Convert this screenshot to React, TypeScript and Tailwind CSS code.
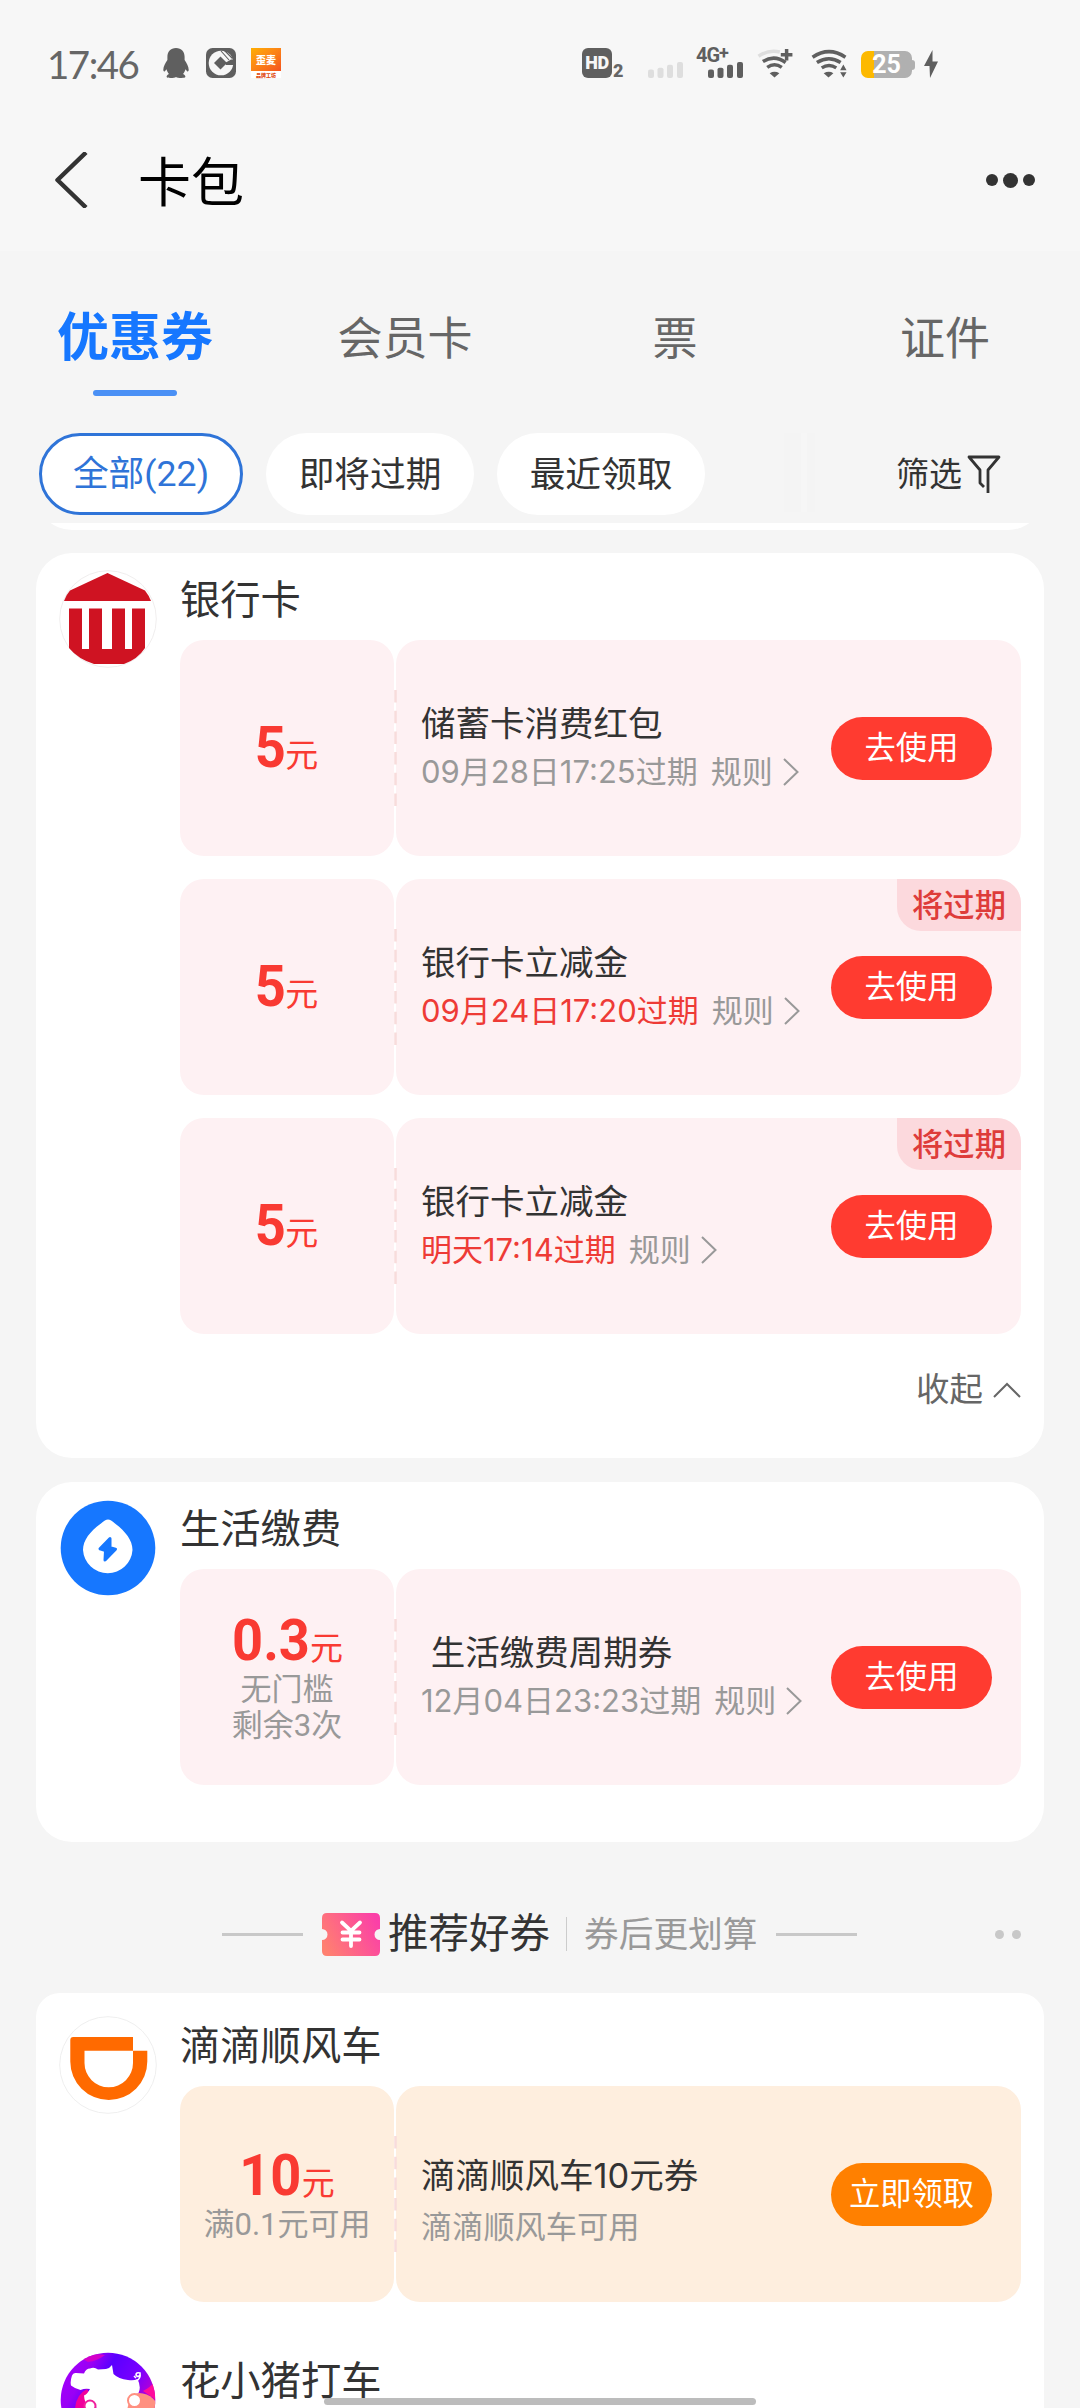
import type { ReactNode } from "react";

const DARK = "#5f5f5f";

function StatusBar() {
  return (
    <div className="flex h-[124px] items-start pl-[47px] pt-[48px] text-[#666]">
      <div className="w-[96px] font-['Lato'] text-[38.5px] leading-[33px] tracking-[-1.5px]">17:46</div>
      <svg className="ml-[20px] h-[30px] w-[26px]" viewBox="0 0 26 31" preserveAspectRatio="none" fill={DARK}>
        <path d="M13 0C7.500 0 4.400 4 4.400 9v3.500C2.500 15.500.3 19 .3 22.500c0 1.500.8 2 1.600 1.500l1.600-2c.5 2 1.300 3.500 2.500 4.800-1.500.8-2.400 1.800-2.400 3 0 1 1.500 1.200 4 1.200 2.600 0 4.500-.4 5.400-1 .9.600 2.800 1 5.400 1 2.500 0 4-.2 4-1.200 0-1.200-.9-2.200-2.400-3 1.200-1.300 2-2.800 2.500-4.800l1.600 2c.8.5 1.600 0 1.600-1.500 0-3.500-2.200-7-4.100-10V9c0-5-3.100-9-8.600-9z" />
      </svg>
      <svg className="ml-[17px] h-[30px] w-[30px]" viewBox="0 0 30 30">
        <rect width="30" height="30" rx="6.500" fill={DARK} />
        <circle cx="15" cy="15" r="12.300" fill="#f7f7f7" />
        <path d="M14.500 8.500l6.500 6.500-6.500 6.500L8 15z" fill={DARK} />
        <path d="M19 15L25 11.500h5V17h-10z" fill={DARK} />
        <path d="M15 3l8 9M18.500 2.500l8 8" stroke={DARK} strokeWidth="1.100" />
      </svg>
      <div className="ml-[15px] flex h-[30px] w-[30px] flex-col bg-white font-['Noto_Sans_CJK_SC']">
        <div className="flex h-[23px] items-center justify-center bg-linear-to-br from-[#ffae00] to-[#f4511e] text-[10px] font-black leading-none text-white">歪麦</div>
        <div className="flex h-[7px] items-center justify-center whitespace-nowrap text-[5px] font-black leading-none text-[#e04a10]">品牌工坊</div>
      </div>

      <div className="ml-[301px] flex h-[30px] w-[30px] items-center justify-center rounded-[6px] bg-[#5f5f5f] font-['Roboto'] text-[18px] font-black leading-none tracking-[-0.5px] text-[#f7f7f7]">HD</div>
      <div className="ml-[1px] mt-[14px] w-[12px] font-['Roboto'] text-[18px] font-black leading-[18px]">2</div>
      <Bars className="ml-[23px] mt-[14px]" color="#dedede" />
      <div className="ml-[13px] h-[30px] w-[48px]">
        <div className="flex h-[14px] font-['Roboto'] text-[20px] font-bold leading-[15px] tracking-[-1px] text-[#5f5f5f]">
          4G<span className="text-[18px] leading-[9px]">+</span>
        </div>
        <Bars className="ml-[12px]" color={DARK} />
      </div>
      <svg className="ml-[13px] h-[30px] w-[36px]" viewBox="0 0 36 31" fill="none" strokeWidth="3.600">
        <path d="M1 8.500Q11 1.500 23 4.200" stroke="#dedede" />
        <path d="M5.500 14Q17.500 6.500 29 15" stroke={DARK} />
        <path d="M10 20Q17.500 14.500 25 20" stroke={DARK} />
        <path d="M12.500 26Q17.500 23 22.500 26L17.500 30.500z" fill={DARK} />
        <path d="M30 1v12M24 7h12" stroke={DARK} />
      </svg>
      <svg className="ml-[18px] h-[30px] w-[37px]" viewBox="0 0 37 31" fill="none" strokeWidth="3.600">
        <path d="M1 9.500Q18 -2 35 9.500M5.500 15Q18 7 30 15M10.500 20.500Q18 15.500 25.500 20.500" stroke={DARK} />
        <path d="M12.500 26Q18 23 22.500 26L17.500 30.500z" fill={DARK} />
        <path d="M29.500 23l3.300-6 3.300 6zM29.500 25l3.300 5.500 3.300-5.500z" fill={DARK} />
      </svg>
      <div className="ml-[13px] mt-[3px] flex items-center">
        <div className="flex h-[27px] w-[51px] items-center justify-center rounded-[7px] bg-linear-to-r from-[#fdb900] from-25% to-[#b0b0b0] to-25% font-['Roboto'] text-[25px] font-bold leading-none text-white">25</div>
        <div className="h-[10px] w-[3px] rounded-r-[3px] bg-[#b0b0b0]" />
      </div>
      <svg className="ml-[9px] mt-[2px] h-[28px] w-[14px]" viewBox="0 0 14 28" fill={DARK}>
        <path d="M8.500 0L0 16h5.500L6 28l8-16.500H8.500z" />
      </svg>
    </div>
  );
}

function Bars({ className, color }: { className: string; color: string }) {
  return (
    <svg className={`h-[16px] w-[35px] ${className}`} viewBox="0 0 35 17" preserveAspectRatio="none" fill={color}>
      <rect x="0" y="8" width="6" height="9" rx="2" />
      <rect x="9.500" y="6" width="6" height="11" rx="2" />
      <rect x="19" y="3" width="6" height="14" rx="2" />
      <rect x="29" y="0" width="6" height="17" rx="2" />
    </svg>
  );
}

function NavBar() {
  return (
    <div className="flex h-[127px] items-start pl-[54px] pr-[45px]">
      <svg className="mt-[28px] h-[56px] w-[34px]" viewBox="0 0 34 56" fill="none" stroke="#333" strokeWidth="4.500">
        <path d="M32 0.500L3.500 28 32 55.500" strokeLinejoin="round" />
      </svg>
      <h1 className="ml-[50px] mt-[26px] text-[53px] leading-[66px] text-black">卡包</h1>
      <div className="ml-auto mt-[48px] flex h-[16px] items-center gap-[5px]">
        <i className="size-[12px] rounded-full bg-[#333]" />
        <i className="size-[15px] rounded-full bg-[#333]" />
        <i className="size-[12px] rounded-full bg-[#333]" />
      </div>
    </div>
  );
}

function Tabs() {
  return (
    <nav className="grid h-[182px] shrink-0 grid-cols-4 pt-[54px] text-center text-[45px] leading-[68px] text-[#666]">
      <div className="flex flex-col items-center">
        <span className="text-[52px] font-bold leading-[66px] text-[#1677ff]">优惠券</span>
        <i className="mt-[19px] h-[6px] w-[84px] rounded-full bg-[#4a90f5]" />
      </div>
      <span>会员卡</span>
      <span>票</span>
      <span>证件</span>
    </nav>
  );
}

function Filters() {
  return (
    <div className="flex h-[90px] shrink-0 items-start pl-[39px] text-[35.7px] leading-none text-[#333]">
      <div className="flex h-[82px] w-[204px] items-center justify-center rounded-full border-[3px] border-[#2f74d8] bg-white pt-[2px] font-['Roboto','Noto_Sans_CJK_SC'] text-[#2f74d8]">全部(22)</div>
      <div className="ml-[23px] flex h-[82px] w-[208px] items-center justify-center rounded-full bg-white pt-[1px]">即将过期</div>
      <div className="ml-[23px] flex h-[82px] w-[208px] items-center justify-center rounded-full bg-white pt-[1px]">最近领取</div>
      <div className="ml-[79px] flex h-[79px] w-[31px] justify-end bg-[#f4f4f4]">
        <i className="mr-[8px] w-[6px] bg-[#f6f6f6]" />
      </div>
      <div className="ml-[81px] flex h-[82px] items-center text-[33px]">
        筛选
        <svg className="ml-[5px] h-[38px] w-[34px]" viewBox="0 0 34 38" fill="none" stroke="#333" strokeWidth="2.800">
          <path d="M21 38V15L32 2H2l11 13v13l4 4" strokeLinejoin="round" />
        </svg>
      </div>
    </div>
  );
}

function Chevron() {
  return (
    <svg className="ml-[10px] h-[28px] w-[16px]" viewBox="0 0 16 28" fill="none" stroke="#999" strokeWidth="2">
      <path d="M1 1l13.500 13L1 27" />
    </svg>
  );
}

type CouponProps = {
  amount: string;
  notes?: string[];
  title: string;
  date?: string;
  urgent?: boolean;
  badge?: boolean;
  sub?: string;
};

function Coupon({ amount, notes = [], title, date, urgent, badge, sub }: CouponProps) {
  const tone = sub ? "bg-[#feeede]" : "bg-[#fef1f3]";
  return (
    <div className="relative flex h-[216px] gap-[2px]">
      <div className={`flex w-[214px] flex-col items-center justify-center rounded-[24px] ${tone}`}>
        <div className="flex h-[60px] items-baseline pr-[3px] text-[#f93a32]">
          <span className="origin-right scale-x-95 font-['Roboto'] text-[57px] font-bold leading-[60px]">{amount}</span>
          <span className="text-[33px] leading-none">元</span>
        </div>
        {notes.map((n) => (
          <div key={n} className="h-[36px] font-['Roboto','Noto_Sans_CJK_SC'] text-[31px] leading-[37px] text-[#999]">{n}</div>
        ))}
      </div>
      <svg className="absolute left-[214px] top-[50px] h-[117px] w-[3px]" viewBox="0 0 3 117">
        <path d="M1.500 0V117" stroke="#f8dcdb" strokeWidth="2.500" strokeDasharray="12.500 8.200" />
      </svg>
      <div className={`flex flex-1 items-center rounded-[24px] pl-[25px] pr-[29px] ${tone}`}>
        <div className={`leading-[48px] ${sub ? "pt-[11px]" : ""}`}>
          <div className="h-[48px] whitespace-pre text-[34.5px] text-[#333]">{title}</div>
          {date && (
            <div className="flex h-[48px] items-center text-[31px] text-[#999]">
              <span className={urgent ? "text-[#ee3b36]" : ""}>{date}</span>
              <span className="ml-[13px]">规则</span>
              <Chevron />
            </div>
          )}
          {sub && <div className="h-[48px] pt-[3px] text-[31.2px] text-[#999]">{sub}</div>}
        </div>
        <button
          className={`ml-auto flex h-[63px] w-[161px] items-center justify-center rounded-full pt-[2px] text-[31.3px] leading-none text-white ${sub ? "bg-[#ff8000]" : "bg-[#ff3b30]"}`}
        >
          {sub ? "立即领取" : "去使用"}
        </button>
      </div>
      {badge && (
        <div className="absolute right-0 top-0 flex h-[52px] w-[124px] items-center justify-center rounded-bl-[24px] rounded-tr-[24px] bg-[#fcd9dd] pt-[3px] text-[31.3px] font-medium leading-none text-[#de3c3a]">
          将过期
        </div>
      )}
    </div>
  );
}

function Group({ icon, name, children, loose }: { icon: ReactNode; name: string; children?: ReactNode; loose?: boolean }) {
  return (
    <div className={`flex px-[23px] ${loose ? "pt-[6px]" : ""}`}>
      <div className="mt-[17px] size-[98px]">{icon}</div>
      <div className="ml-[23px] flex-1">
        <h2 className="h-[87px] pt-[17px] text-[40.3px] leading-[60px] text-[#333]">{name}</h2>
        <div className="flex flex-col gap-[23px]">{children}</div>
      </div>
    </div>
  );
}

function BankIcon() {
  return (
    <svg className="size-[98px]" viewBox="0 0 98 98" fill="#cf1322">
      <circle cx="49" cy="49" r="48.300" fill="#fff" stroke="#f0eeee" />
      <path d="M48.500 3L86 20.500q4 5 6 10.500H5q2-6 6-10.500z" />
      <path d="M10 38.500h13V79h7V38.500h13V79h10V38.500h13V79h7V38.500h13V78Q79 89 65 94H35Q19 89 10 78z" />
    </svg>
  );
}

function PowerIcon() {
  return (
    <svg className="size-[98px]" viewBox="0 0 98 98">
      <circle cx="49" cy="49" r="47.300" fill="#1677ff" />
      <path d="M49 20.500c2 0 4 1.500 7 4C66 32 73.500 41 73.500 51a24.800 24.800 0 0 1-49.500 0c0-10 7.500-19 18-26.500 3-2.500 5-4 7-4z" fill="#fff" />
      <path d="M51 39.500L41 49.800l5.500 1.700-.5 9.500L56.500 50.200 51 48.800z" fill="#1677ff" stroke="#1677ff" strokeWidth="3" strokeLinejoin="round" />
    </svg>
  );
}

function DidiIcon() {
  return (
    <svg className="size-[98px]" viewBox="0 0 98 98">
      <circle cx="49" cy="49" r="48.300" fill="#fff" stroke="#efefef" />
      <path d="M14.300 21H74v13.700H25.500V47a24.200 24.200 0 0 0 48.500 0V34.700H88.300V45.500a38.500 38.500 0 0 1-77 0V24q0-3 3-3z" fill="#ff6a00" />
    </svg>
  );
}

function PigIcon() {
  return (
    <svg className="size-[98px]" viewBox="0 0 98 98">
      <defs>
        <linearGradient id="pig" x1="0" y1="0" x2="1" y2="0.600">
          <stop offset="0" stopColor="#a800ff" />
          <stop offset="0.300" stopColor="#9a00f5" />
          <stop offset="0.450" stopColor="#5a00ff" />
          <stop offset="0.700" stopColor="#7a00ff" />
          <stop offset="1" stopColor="#e000b8" />
        </linearGradient>
        <clipPath id="pigClip"><circle cx="49" cy="49" r="47.300" /></clipPath>
      </defs>
      <g clipPath="url(#pigClip)">
        <rect width="98" height="98" fill="url(#pig)" />
        <path d="M20 6Q34 2 46 4 38 10 29 11z" fill="#d400c8" />
        <path d="M16 60q0-16 12-22l6 10-8 14z" fill="#f0009c" />
        <path d="M84 40q8-4 12-10v18z" fill="#ff0a9c" />
        <circle cx="80" cy="62" r="20" fill="#ff9080" />
        <path d="M13 24.500q1-3 4-2.500l8 .5q2-5 6-5 4-2 8 1l8-.5q4-1 6-4l1.500 9q5 5 14.500 6 6 1 9.500-1 4 8 1 14-10 2-10 11l-2 8H39l-2-5q-5-6-10-3-2-5-2-8.500 3-1 6-6.500-5-1-9.500 1-5-1-9.500-4.500-1-4 1-10z" fill="#fff" />
        <path d="M77 30q5-2 4-8-4-1-4 2 2 3 4 0M75 25l2 2" fill="none" stroke="#fff" strokeWidth="1.600" />
        <circle cx="31" cy="55" r="5.500" fill="#fff" stroke="#f0209c" strokeWidth="2" />
        <circle cx="75.500" cy="49.500" r="6.500" fill="#fff" stroke="#ff9080" strokeWidth="2" />
      </g>
    </svg>
  );
}

function RecommendHeader() {
  return (
    <div className="flex h-[151px] shrink-0 items-center pl-[222px] pt-[33px]">
      <i className="h-[3px] w-[81px] bg-[#c8c8c8]" />
      <svg className="ml-[19px] h-[43px] w-[58px]" viewBox="0 0 58 43">
        <defs>
          <linearGradient id="ticket" x1="0" y1="0.700" x2="1" y2="0.300">
            <stop offset="0" stopColor="#ff8070" />
            <stop offset="1" stopColor="#fb3fa8" />
          </linearGradient>
        </defs>
        <path d="M5 0h48q5 0 5 5v11a5.500 5.500 0 0 0 0 11v11q0 5-5 5H5q-5 0-5-5V27a5.500 5.500 0 0 0 0-11V5q0-5 5-5z" fill="url(#ticket)" />
        <path d="M20 9.500l9 8.500 9-8.500M29 18v15M20.500 19.500h17M20.500 26.500h17" fill="none" stroke="#fff" strokeWidth="3.800" strokeLinecap="round" />
      </svg>
      <span className="ml-[8px] pt-[1px] text-[40.500px] leading-none text-[#333]">推荐好券</span>
      <i className="ml-[16px] h-[34px] w-px bg-[#ccc]" />
      <span className="ml-[17px] pt-[1px] text-[34.700px] leading-none text-[#999]">券后更划算</span>
      <i className="ml-[19px] h-[3px] w-[81px] bg-[#c8c8c8]" />
      <i className="ml-[138px] size-[9px] rounded-full bg-[#c8c8c8]" />
      <i className="ml-[8px] size-[9px] rounded-full bg-[#c8c8c8]" />
    </div>
  );
}

export default function App() {
  return (
    <div className="relative flex h-[2408px] w-[1080px] flex-col overflow-hidden bg-[#f5f5f5] font-['Inter','Noto_Sans_CJK_SC',sans-serif]">
      <header className="h-[251px] shrink-0 bg-[#f7f7f7]">
        <StatusBar />
        <NavBar />
      </header>
      <Tabs />
      <Filters />
      <div className="mx-[36px] flex h-[7px] shrink-0 flex-col justify-end overflow-hidden">
        <div className="h-[80px] shrink-0 rounded-[36px] bg-white" />
      </div>

      <section className="mx-[36px] mt-[23px] h-[905px] shrink-0 rounded-[36px] bg-white">
        <Group icon={<BankIcon />} name="银行卡">
          <Coupon amount="5" title="储蓄卡消费红包" date="09月28日17:25过期" />
          <Coupon amount="5" title="银行卡立减金" date="09月24日17:20过期" urgent badge />
          <Coupon amount="5" title="银行卡立减金" date="明天17:14过期" urgent badge />
        </Group>
        <div className="mt-[32px] flex h-[48px] items-center justify-end pr-[23px] text-[33.500px] leading-none text-[#666]">
          收起
          <svg className="ml-[10px] h-[16px] w-[28px]" viewBox="0 0 28 16" fill="none" stroke="#666" strokeWidth="2">
            <path d="M1 15L14 2l13 13" />
          </svg>
        </div>
      </section>

      <section className="mx-[36px] mt-[24px] h-[360px] shrink-0 rounded-[36px] bg-white">
        <Group icon={<PowerIcon />} name="生活缴费">
          <Coupon amount="0.3" notes={["无门槛", "剩余3次"]} title=" 生活缴费周期券" date="12月04日23:23过期" />
        </Group>
      </section>

      <RecommendHeader />

      <section className="mx-[36px] shrink-0 rounded-t-[24px] bg-white">
        <Group icon={<DidiIcon />} name="滴滴顺风车" loose>
          <Coupon amount="10" notes={["满0.1元可用"]} title="滴滴顺风车10元券" sub="滴滴顺风车可用" />
        </Group>
        <div className="h-[26px]" />
        <Group icon={<PigIcon />} name="花小猪打车" loose />
      </section>

      <div className="absolute bottom-[3px] left-[324px] h-[7px] w-[432px] rounded-full bg-[#bcbcbc]" />
    </div>
  );
}
